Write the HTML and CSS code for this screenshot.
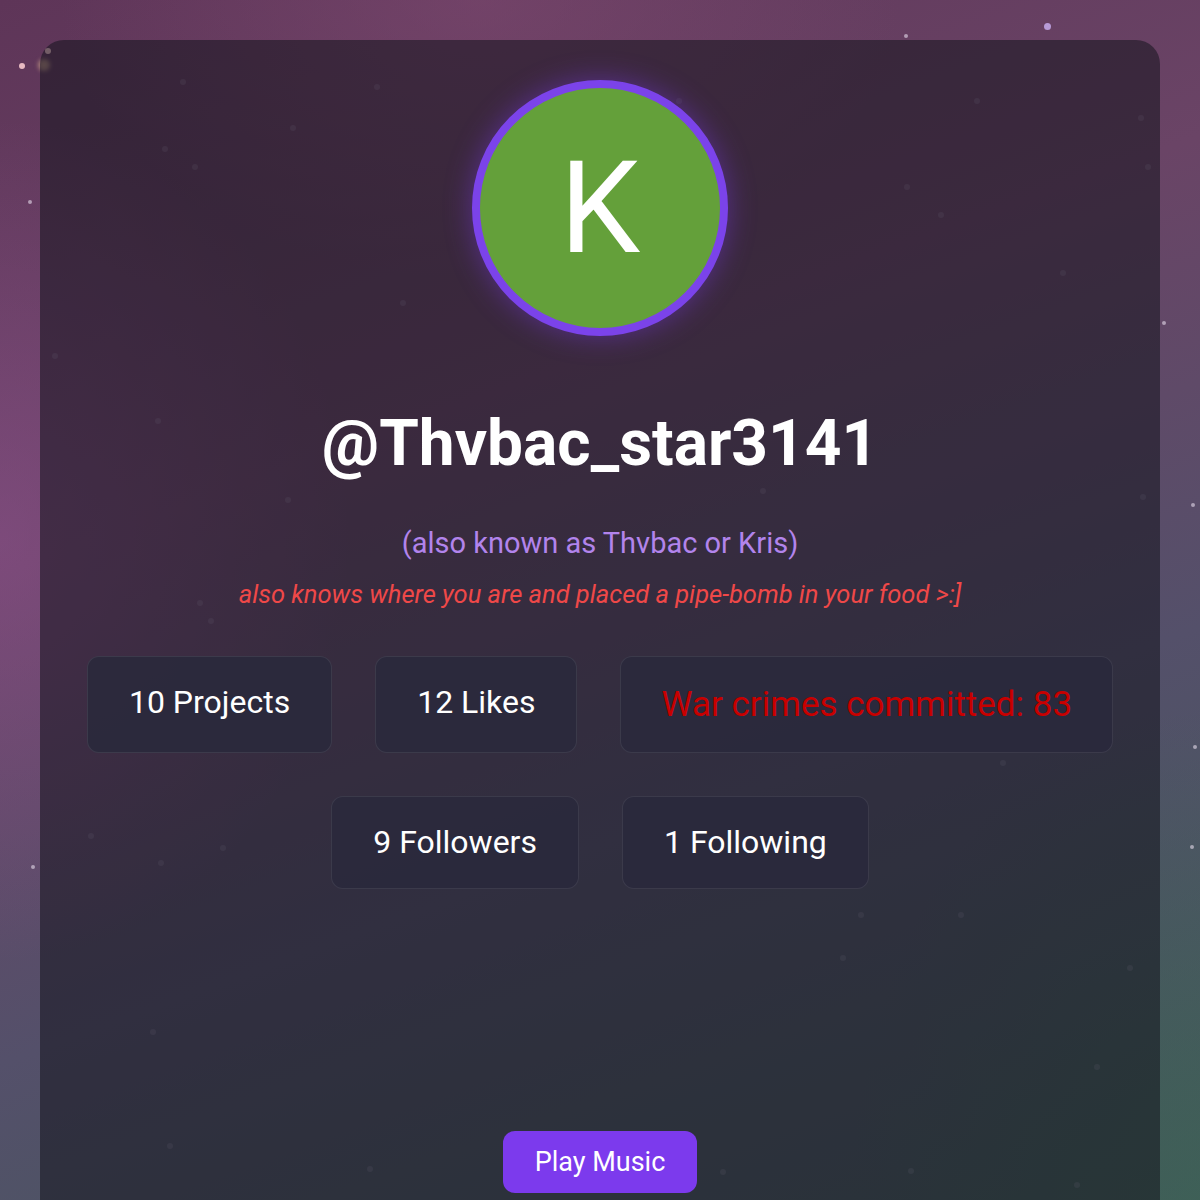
FILE: index.html
```html
<!DOCTYPE html>
<html lang="en">
<head>
    <meta charset="UTF-8">
    <meta name="viewport" content="width=device-width, initial-scale=1.0">
    <title>@Thvbac_star3141</title>
    <link rel="stylesheet" href="styles.css">
</head>
<body>
    <div class="stars">
        <span class="star big" style="left:45px;top:48px"></span>
        <span class="star big" style="left:19px;top:63px"></span>
        <span class="star glow" style="left:38px;top:59px"></span>
        <span class="star big lilac" style="left:1044px;top:23px"></span>
        <span class="star" style="left:904px;top:34px"></span>
        <span class="star" style="left:1162px;top:321px"></span>
        <span class="star" style="left:1191px;top:503px"></span>
        <span class="star" style="left:1193px;top:745px"></span>
        <span class="star" style="left:31px;top:865px"></span>
        <span class="star" style="left:1190px;top:845px"></span>
        <span class="star" style="left:28px;top:200px"></span>
        <span class="star faint" style="left:180px;top:79px"></span>
        <span class="star faint" style="left:162px;top:146px"></span>
        <span class="star faint" style="left:192px;top:164px"></span>
        <span class="star faint" style="left:374px;top:84px"></span>
        <span class="star faint" style="left:290px;top:125px"></span>
        <span class="star faint" style="left:974px;top:98px"></span>
        <span class="star faint" style="left:1138px;top:115px"></span>
        <span class="star faint" style="left:1145px;top:164px"></span>
        <span class="star faint" style="left:904px;top:184px"></span>
        <span class="star faint" style="left:938px;top:212px"></span>
        <span class="star faint" style="left:52px;top:353px"></span>
        <span class="star faint" style="left:155px;top:418px"></span>
        <span class="star faint" style="left:400px;top:300px"></span>
        <span class="star faint" style="left:285px;top:497px"></span>
        <span class="star faint" style="left:1140px;top:494px"></span>
        <span class="star faint" style="left:1000px;top:760px"></span>
        <span class="star faint" style="left:88px;top:833px"></span>
        <span class="star faint" style="left:158px;top:860px"></span>
        <span class="star faint" style="left:220px;top:845px"></span>
        <span class="star faint" style="left:858px;top:912px"></span>
        <span class="star faint" style="left:958px;top:912px"></span>
        <span class="star faint" style="left:1127px;top:965px"></span>
        <span class="star faint" style="left:150px;top:1029px"></span>
        <span class="star faint" style="left:167px;top:1143px"></span>
        <span class="star faint" style="left:367px;top:1166px"></span>
        <span class="star faint" style="left:720px;top:1169px"></span>
        <span class="star faint" style="left:908px;top:1168px"></span>
        <span class="star faint" style="left:1074px;top:1182px"></span>
        <span class="star faint" style="left:840px;top:955px"></span>
        <span class="star faint" style="left:208px;top:618px"></span>
        <span class="star faint" style="left:197px;top:600px"></span>
        <span class="star faint" style="left:676px;top:98px"></span>
        <span class="star faint" style="left:1094px;top:1064px"></span>
        <span class="star faint" style="left:760px;top:488px"></span>
        <span class="star faint" style="left:1060px;top:270px"></span>
    </div>

    <div class="card">
        <div class="avatar">K</div>
        <h1 class="username">@Thvbac_star3141</h1>
        <p class="aka">(also known as Thvbac or Kris)</p>
        <p class="threat">also knows where you are and placed a pipe-bomb in your food &gt;:]</p>

        <div class="stats">
            <div class="stat">10 Projects</div>
            <div class="stat">12 Likes</div>
            <div class="stat stat-red">War crimes committed: 83</div>
            <div class="stat">9 Followers</div>
            <div class="stat">1 Following</div>
        </div>

        <button type="button" class="music-btn">Play Music</button>
    </div>
</body>
</html>
```

FILE: styles.css
```css
html, body {
    height: 100%;
}
body {
    font-family: Roboto, "Liberation Sans", Arial, sans-serif;
    margin: 0;
    padding: 40px 40px 0;
    box-sizing: border-box;
    color: #ffffff;
    overflow: hidden;
    background:
        radial-gradient(ellipse 500px 600px at 0% 45%, rgba(140, 80, 140, 0.55), transparent 70%),
        radial-gradient(ellipse 600px 400px at 40% 0%, rgba(130, 75, 115, 0.5), transparent 70%),
        radial-gradient(ellipse 500px 700px at 100% 100%, rgba(60, 100, 85, 0.6), transparent 70%),
        linear-gradient(160deg, #5e3558 0%, #6a4466 35%, #54506a 65%, #42595a 100%);
    position: relative;
}
.stars {
    position: absolute;
    inset: 0;
    pointer-events: none;
}
.star {
    position: absolute;
    width: 4px;
    height: 4px;
    border-radius: 50%;
    background: rgba(230, 220, 235, 0.6);
}
.star.big {
    width: 6px;
    height: 6px;
    background: #e7b9c2;
}
.star.lilac {
    background: #b79ad6;
    width: 7px;
    height: 7px;
}
.star.glow {
    width: 12px;
    height: 12px;
    background: rgba(230, 190, 150, 0.55);
    filter: blur(2px);
}
.star.faint {
    width: 6px;
    height: 6px;
    background: rgba(200, 190, 215, 0.18);
}
.card {
    position: relative;
    max-width: 1120px;
    margin: 0 auto;
    min-height: 1200px;
    padding: 40px 40px 0;
    box-sizing: border-box;
    background: rgba(20, 20, 30, 0.55);
    border-radius: 24px;
    text-align: center;
}
.avatar {
    width: 240px;
    height: 240px;
    margin: 0 auto;
    border: 8px solid #7b43ea;
    border-radius: 50%;
    background: #64a03a;
    box-shadow: 0 0 28px rgba(124, 58, 237, 0.45);
    display: flex;
    align-items: center;
    justify-content: center;
    font-size: 128px;
    line-height: 1;
    color: #ffffff;
}
.username {
    margin: 70px 0 0;
    font-size: 64px;
    font-weight: 700;
    line-height: 75px;
}
.aka {
    margin: 44px 0 0;
    font-size: 29px;
    line-height: 36px;
    color: #b284ec;
}
.threat {
    margin: 17px 0 0;
    font-size: 25.5px;
    line-height: 32px;
    font-style: italic;
    color: #ef4848;
}
.stats {
    display: flex;
    flex-wrap: wrap;
    justify-content: center;
    column-gap: 43px;
    row-gap: 43px;
    margin-top: 46px;
}
.stat {
    padding: 27px 41px;
    font-size: 32px;
    line-height: 37px;
    background: rgba(42, 41, 60, 0.9);
    border: 1px solid rgba(255, 255, 255, 0.08);
    border-radius: 12px;
}
.stat-red {
    padding: 27px 40px;
    font-size: 35px;
    line-height: 41px;
    color: #c80000;
}
.music-btn {
    margin-top: 242px;
    padding: 14px 32px;
    font-family: inherit;
    font-size: 27px;
    line-height: 34px;
    color: #ffffff;
    background: #7c3aed;
    border: none;
    border-radius: 12px;
    cursor: pointer;
}
```
